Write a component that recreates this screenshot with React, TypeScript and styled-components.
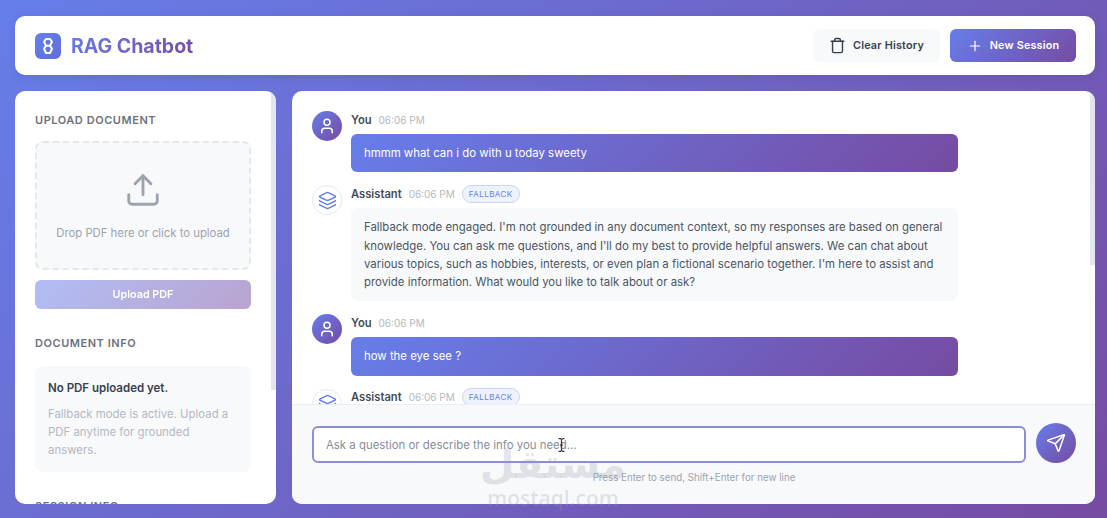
import React from "react";
import styled, { createGlobalStyle } from "styled-components";
import { Upload, User, Layers, Trash, Plus, Send } from "lucide-react";

const Global = createGlobalStyle`
  html, body { margin: 0; padding: 0; height: 100%; }
  body { font-family: Inter, "Liberation Sans", sans-serif; overflow: hidden; }
  * { box-sizing: border-box; }
`;

const Page = styled.div`
  position: relative;
  width: 1107px;
  height: 518px;
  padding: 16px 12px 14px 15px;
  display: flex;
  flex-direction: column;
  gap: 16px;
  background: linear-gradient(135deg, #667eea 0%, #764ba2 100%);
  overflow: hidden;
`;

const Header = styled.header`
  flex: 0 0 59px;
  background: #fff;
  border-radius: 10px;
  display: flex;
  align-items: center;
  justify-content: space-between;
  padding: 0 19px 0 20px;
  box-shadow: 0 2px 8px rgba(40, 30, 90, 0.12);
`;

const Brand = styled.div`
  display: flex;
  align-items: center;
  gap: 10px;
`;

const LogoMark = styled.div`
  width: 26px;
  height: 26px;
  border-radius: 6px;
  background: linear-gradient(135deg, #667eea, #5f6fdc);
  display: flex;
  align-items: center;
  justify-content: center;
`;

const Title = styled.h1`
  margin: 0;
  font-size: 19.5px;
  line-height: 26px;
  font-weight: 700;
  background: linear-gradient(135deg, #667eea, #764ba2);
  -webkit-background-clip: text;
  background-clip: text;
  color: transparent;
`;

const Actions = styled.div`
  display: flex;
  gap: 10px;
`;

const HeaderButton = styled.button<{ $primary?: boolean }>`
  height: 33px;
  width: ${(p) => (p.$primary ? "126px" : "127px")};
  border: 0;
  border-radius: 6px;
  display: flex;
  align-items: center;
  justify-content: center;
  gap: 7px;
  padding: 0;
  font-family: inherit;
  font-size: 10.8px;
  font-weight: 600;
  letter-spacing: 0.2px;
  color: ${(p) => (p.$primary ? "#fff" : "#374151")};
  background: ${(p) =>
    p.$primary ? "linear-gradient(135deg, #667eea, #764ba2)" : "#f8f9fb"};
`;

const Body = styled.div`
  flex: 1;
  min-height: 0;
  display: flex;
  gap: 16px;
`;

const Sidebar = styled.aside`
  position: relative;
  flex: 0 0 261px;
  background: #fff;
  border-radius: 10px;
  padding: 22px 25px 0 20px;
  overflow: hidden;
`;

const ScrollThumb = styled.div<{ $height: number }>`
  position: absolute;
  top: 0;
  right: 0;
  width: 5px;
  height: ${(p) => p.$height}px;
  background: #e3e6ef;
`;

const SectionTitle = styled.h2<{ $gap?: number }>`
  margin: 0 0 ${(p) => p.$gap ?? 14}px;
  font-size: 11px;
  line-height: 14px;
  font-weight: 600;
  letter-spacing: 0.55px;
  color: #6b7280;
  text-transform: uppercase;
`;

const DropZone = styled.div`
  height: 129px;
  border: 2px dashed #e5e7eb;
  border-radius: 8px;
  background: #f8f9fb;
  display: flex;
  flex-direction: column;
  align-items: center;
  padding-top: 28px;
  color: #9ca3af;
`;

const DropText = styled.div`
  margin-top: 17px;
  font-size: 11.3px;
  line-height: 14px;
  color: #9ca3af;
  white-space: nowrap;
`;

const UploadButton = styled.button`
  display: block;
  width: 100%;
  height: 29px;
  margin-top: 10px;
  border: 0;
  border-radius: 6px;
  font-family: inherit;
  font-size: 10.8px;
  font-weight: 600;
  color: #fff;
  background: linear-gradient(135deg, #667eea, #764ba2);
  opacity: 0.5;
`;

const Section = styled.section`
  margin-top: 27px;
`;

const InfoCard = styled.div`
  height: 106px;
  padding: 14px 13px;
  border-radius: 8px;
  background: #f8f9fb;
`;

const InfoStrong = styled.div`
  font-size: 11.5px;
  line-height: 16px;
  font-weight: 600;
  color: #374151;
  margin-bottom: 9px;
`;

const InfoText = styled.div`
  font-size: 11.4px;
  line-height: 18.2px;
  color: #b3b8c3;
`;

const Main = styled.main`
  position: relative;
  flex: 1;
  min-width: 0;
  background: #fff;
  border-radius: 10px;
  overflow: hidden;
  display: flex;
  flex-direction: column;
`;

const Messages = styled.div`
  flex: 1;
  min-height: 0;
  padding: 20px 16px 0 20px;
  overflow: hidden;
  display: flex;
  flex-direction: column;
  gap: 13px;
`;

const Row = styled.div`
  display: flex;
  gap: 9px;
  flex-shrink: 0;
`;

const Avatar = styled.div<{ $user?: boolean }>`
  flex: 0 0 30px;
  width: 30px;
  height: 30px;
  border-radius: 50%;
  display: flex;
  align-items: center;
  justify-content: center;
  color: ${(p) => (p.$user ? "#fff" : "#667eea")};
  background: ${(p) =>
    p.$user ? "linear-gradient(135deg, #667eea, #764ba2)" : "#fff"};
  border: ${(p) => (p.$user ? "0" : "1.5px solid #e5e7f2")};
`;

const Content = styled.div`
  width: 607px;
`;

const Meta = styled.div`
  height: 16px;
  margin-bottom: 7px;
  padding-top: 1px;
  display: flex;
  align-items: center;
  gap: 7px;
`;

const Name = styled.span`
  font-size: 11.2px;
  font-weight: 600;
  color: #454c5a;
`;

const Time = styled.span`
  font-size: 10px;
  color: #b3b8c3;
`;

const Badge = styled.span`
  height: 18px;
  padding: 0 6px;
  border-radius: 9px;
  border: 1px solid #c9d3f5;
  background: #eef2ff;
  color: #667eea;
  font-size: 8px;
  font-weight: 400;
  letter-spacing: 0.45px;
  line-height: 16px;
`;

const Bubble = styled.div<{ $user?: boolean }>`
  padding: 10px 13px;
  border-radius: 6px;
  font-size: 11.4px;
  line-height: 18.25px;
  color: ${(p) => (p.$user ? "#fff" : "#4b5563")};
  background: ${(p) =>
    p.$user ? "linear-gradient(135deg, #667eea, #764ba2)" : "#f8f9fb"};
`;

const Composer = styled.div`
  position: relative;
  flex: 0 0 100px;
  background: #f8f9fb;
  border-top: 1px solid #eceef3;
  padding: 18px 19px 0 20px;
`;

const InputRow = styled.div`
  display: flex;
  align-items: flex-end;
  gap: 10px;
`;

const Input = styled.input`
  flex: 1;
  min-width: 0;
  height: 37px;
  border: 2px solid #8b90d6;
  border-radius: 6px;
  background: #fff;
  padding: 0 12px;
  font-family: inherit;
  font-size: 11.4px;
  outline: none;
  &::placeholder { color: #878d99; opacity: 1; }
`;

const SendButton = styled.button`
  flex: 0 0 40px;
  width: 40px;
  height: 40px;
  border: 0;
  padding: 0;
  border-radius: 50%;
  display: flex;
  align-items: center;
  justify-content: center;
  color: #fff;
  background: linear-gradient(135deg, #667eea, #764ba2);
`;

const Hint = styled.div`
  margin-top: 9px;
  text-align: center;
  font-size: 9.75px;
  line-height: 12px;
  color: #9ca3af;
`;

const Watermark = styled.div`
  position: absolute;
  left: 458px;
  top: 442px;
  width: 190px;
  text-align: center;
  color: rgba(150, 155, 170, 0.26);
  pointer-events: none;
`;

const WatermarkArabic = styled.div`
  font-family: "DejaVu Sans", sans-serif;
  font-size: 40px;
  line-height: 44px;
  font-weight: 700;
`;

const WatermarkLatin = styled.div`
  font-family: "Open Sans", sans-serif;
  font-size: 21px;
  line-height: 24px;
  font-weight: 600;
`;

const TextCursor = styled.svg`
  position: absolute;
  left: 558px;
  top: 438px;
  pointer-events: none;
`;

const Logo = () => (
  <svg width="14" height="18" viewBox="0 0 14 18" fill="none" stroke="#fff" strokeWidth="2" strokeLinecap="round" strokeLinejoin="round">
    <path d="M5 2h4l2 2.800L9 8.800l2 3L9 16H5l-2-4.200 2-3-2-4z" />
    <path d="M5 8.800h4" />
  </svg>
);

const Message = ({ user, fallback, children }: { user?: boolean; fallback?: boolean; children: React.ReactNode }) => (
  <Row>
    <Avatar $user={user}>{user ? <User size={18} strokeWidth={2} /> : <Layers size={19} strokeWidth={1.8} />}</Avatar>
    <Content>
      <Meta>
        <Name>{user ? "You" : "Assistant"}</Name>
        <Time>06:06 PM</Time>
        {fallback && <Badge>FALLBACK</Badge>}
      </Meta>
      <Bubble $user={user}>{children}</Bubble>
    </Content>
  </Row>
);

export default function App() {
  return (
    <Page>
      <Global />
      <Header>
        <Brand>
          <LogoMark><Logo /></LogoMark>
          <Title>RAG Chatbot</Title>
        </Brand>
        <Actions>
          <HeaderButton><Trash size={17} strokeWidth={2} />Clear History</HeaderButton>
          <HeaderButton $primary><Plus size={16} strokeWidth={1.8} />New Session</HeaderButton>
        </Actions>
      </Header>
      <Body>
        <Sidebar>
          <SectionTitle>Upload Document</SectionTitle>
          <DropZone>
            <Upload size={38} strokeWidth={1.8} />
            <DropText>Drop PDF here or click to upload</DropText>
          </DropZone>
          <UploadButton>Upload PDF</UploadButton>
          <Section>
            <SectionTitle $gap={16}>Document Info</SectionTitle>
            <InfoCard>
              <InfoStrong>No PDF uploaded yet.</InfoStrong>
              <InfoText>Fallback mode is active. Upload a PDF anytime for grounded answers.</InfoText>
            </InfoCard>
          </Section>
          <Section>
            <SectionTitle>Session Info</SectionTitle>
          </Section>
          <ScrollThumb $height={299} />
        </Sidebar>
        <Main>
          <Messages>
            <Message user>hmmm what can i do with u today sweety</Message>
            <Message fallback>
              Fallback mode engaged. I'm not grounded in any document context, so my responses are based on general knowledge. You can ask me questions, and I'll do my best to provide helpful answers. We can chat about various topics, such as hobbies, interests, or even plan a fictional scenario together. I'm here to assist and provide information. What would you like to talk about or ask?
            </Message>
            <Message user>how the eye see ?</Message>
            <Message fallback>
              Fallback mode engaged.
            </Message>
          </Messages>
          <Composer>
            <InputRow>
              <Input placeholder="Ask a question or describe the info you need..." />
              <SendButton><Send size={20} strokeWidth={1.8} /></SendButton>
            </InputRow>
            <Hint>Press Enter to send, Shift+Enter for new line</Hint>
          </Composer>
          <ScrollThumb $height={174} />
        </Main>
      </Body>
      <Watermark>
        <WatermarkArabic>مستقل</WatermarkArabic>
        <WatermarkLatin>mostaql.com</WatermarkLatin>
      </Watermark>
      <TextCursor width="7" height="14" viewBox="0 0 7 14" fill="none" stroke="#333a4a" strokeWidth="1.200">
        <path d="M0.500 0.700h2l1 1 1-1h2M3.500 1.700v10.600M0.500 13.300h2l1-1 1 1h2M2 7h3" />
      </TextCursor>
    </Page>
  );
}
